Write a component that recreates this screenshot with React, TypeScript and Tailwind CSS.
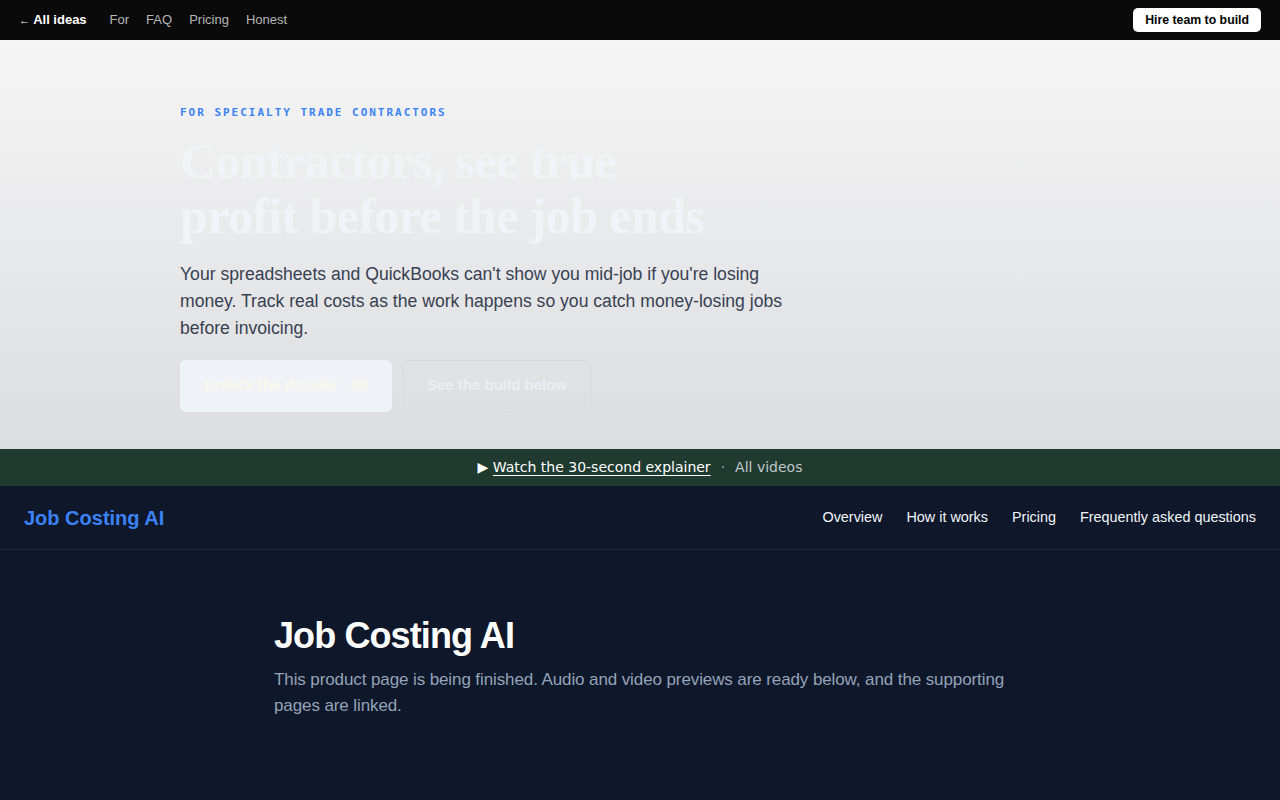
export default function App() {
  return (
    <div className="min-h-screen bg-[#0f172a] font-['Liberation_Sans',Arial,sans-serif]">
      {/* top bar */}
      <div className="flex h-10 items-center justify-between bg-[#0a0a0a] px-[19px]">
        <div className="flex items-center gap-[17px] text-[13px]">
          <a className="font-bold text-white" href="#">
            <span className="text-[11px]">←</span> All ideas
          </a>
          <a className="ml-[6px] text-[#b5b5b5]" href="#">For</a>
          <a className="text-[#b5b5b5]" href="#">FAQ</a>
          <a className="text-[#b5b5b5]" href="#">Pricing</a>
          <a className="text-[#b5b5b5]" href="#">Honest</a>
        </div>
        <button className="h-[24px] rounded-[5px] bg-white px-[12px] text-[12.3px] font-bold leading-[24px] text-black">
          Hire team to build
        </button>
      </div>

      {/* hero */}
      <section className="h-[409px] bg-gradient-to-b from-[#f5f5f5] to-[#dcdde0] px-[180px] pt-[65px]">
        <p className="font-['DejaVu_Sans_Mono',monospace] text-[11px] font-bold tracking-[0.18em] text-[#3b82f6]">
          FOR SPECIALTY TRADE CONTRACTORS
        </p>
        <h1 className="mt-[12px] font-['Liberation_Serif',serif] text-[50px] font-bold leading-[55px] tracking-[-0.012em] text-[#f1f3f7]">
          Contractors, see true
          <br />
          profit before the job ends
        </h1>
        <p className="mt-[17px] max-w-[620px] text-[17.6px] leading-[27px] text-[#374151]">
          Your spreadsheets and QuickBooks can't show you mid-job if you're losing money. Track real costs as the work happens so you catch money-losing jobs before invoicing.
        </p>
        <div className="mt-[18px] flex gap-[11px]">
          <button className="h-[52px] w-[212px] rounded-[6px] bg-[#eff2f7] text-[15px] font-bold text-[#fbf8ea]">
            Unlock the dossier · $5
          </button>
          <button className="h-[52px] w-[188px] rounded-[6px] border border-[#d9dbe0] text-[15px] font-bold text-[#eceef3]">
            See the build below
          </button>
        </div>
      </section>

      {/* explainer strip */}
      <div className="flex h-[37px] items-center justify-center gap-[10px] bg-[#1f3a2f] font-['DejaVu_Sans',sans-serif] text-[14px]">
        <a className="text-white" href="#">
          ▶ <span className="underline underline-offset-[3px]">Watch the 30-second explainer</span>
        </a>
        <span className="text-[#9ca3af]">·</span>
        <a className="text-[#c0c6cc]" href="#">All videos</a>
      </div>

      {/* product nav */}
      <nav className="flex h-16 items-center justify-between border-b border-[#1e293b] px-6">
        <span className="text-[20px] font-bold leading-[26px] text-[#3b82f6]">Job Costing AI</span>
        <div className="flex gap-6 text-[14.4px] text-[#f1f5f9]">
          <a href="#">Overview</a>
          <a href="#">How it works</a>
          <a href="#">Pricing</a>
          <a href="#">Frequently asked questions</a>
        </div>
      </nav>

      {/* main */}
      <main className="ml-[274px] w-[740px] pt-[64px] pb-20">
        <h2 className="text-[36px] font-bold leading-[44px] tracking-[-0.025em] text-white">Job Costing AI</h2>
        <p className="mt-[9px] text-[17px] leading-[26px] tracking-[-0.006em] text-[#94a3b8]">
          This product page is being finished. Audio and video previews are ready below, and the supporting pages are linked.
        </p>
      </main>
    </div>
  );
}
